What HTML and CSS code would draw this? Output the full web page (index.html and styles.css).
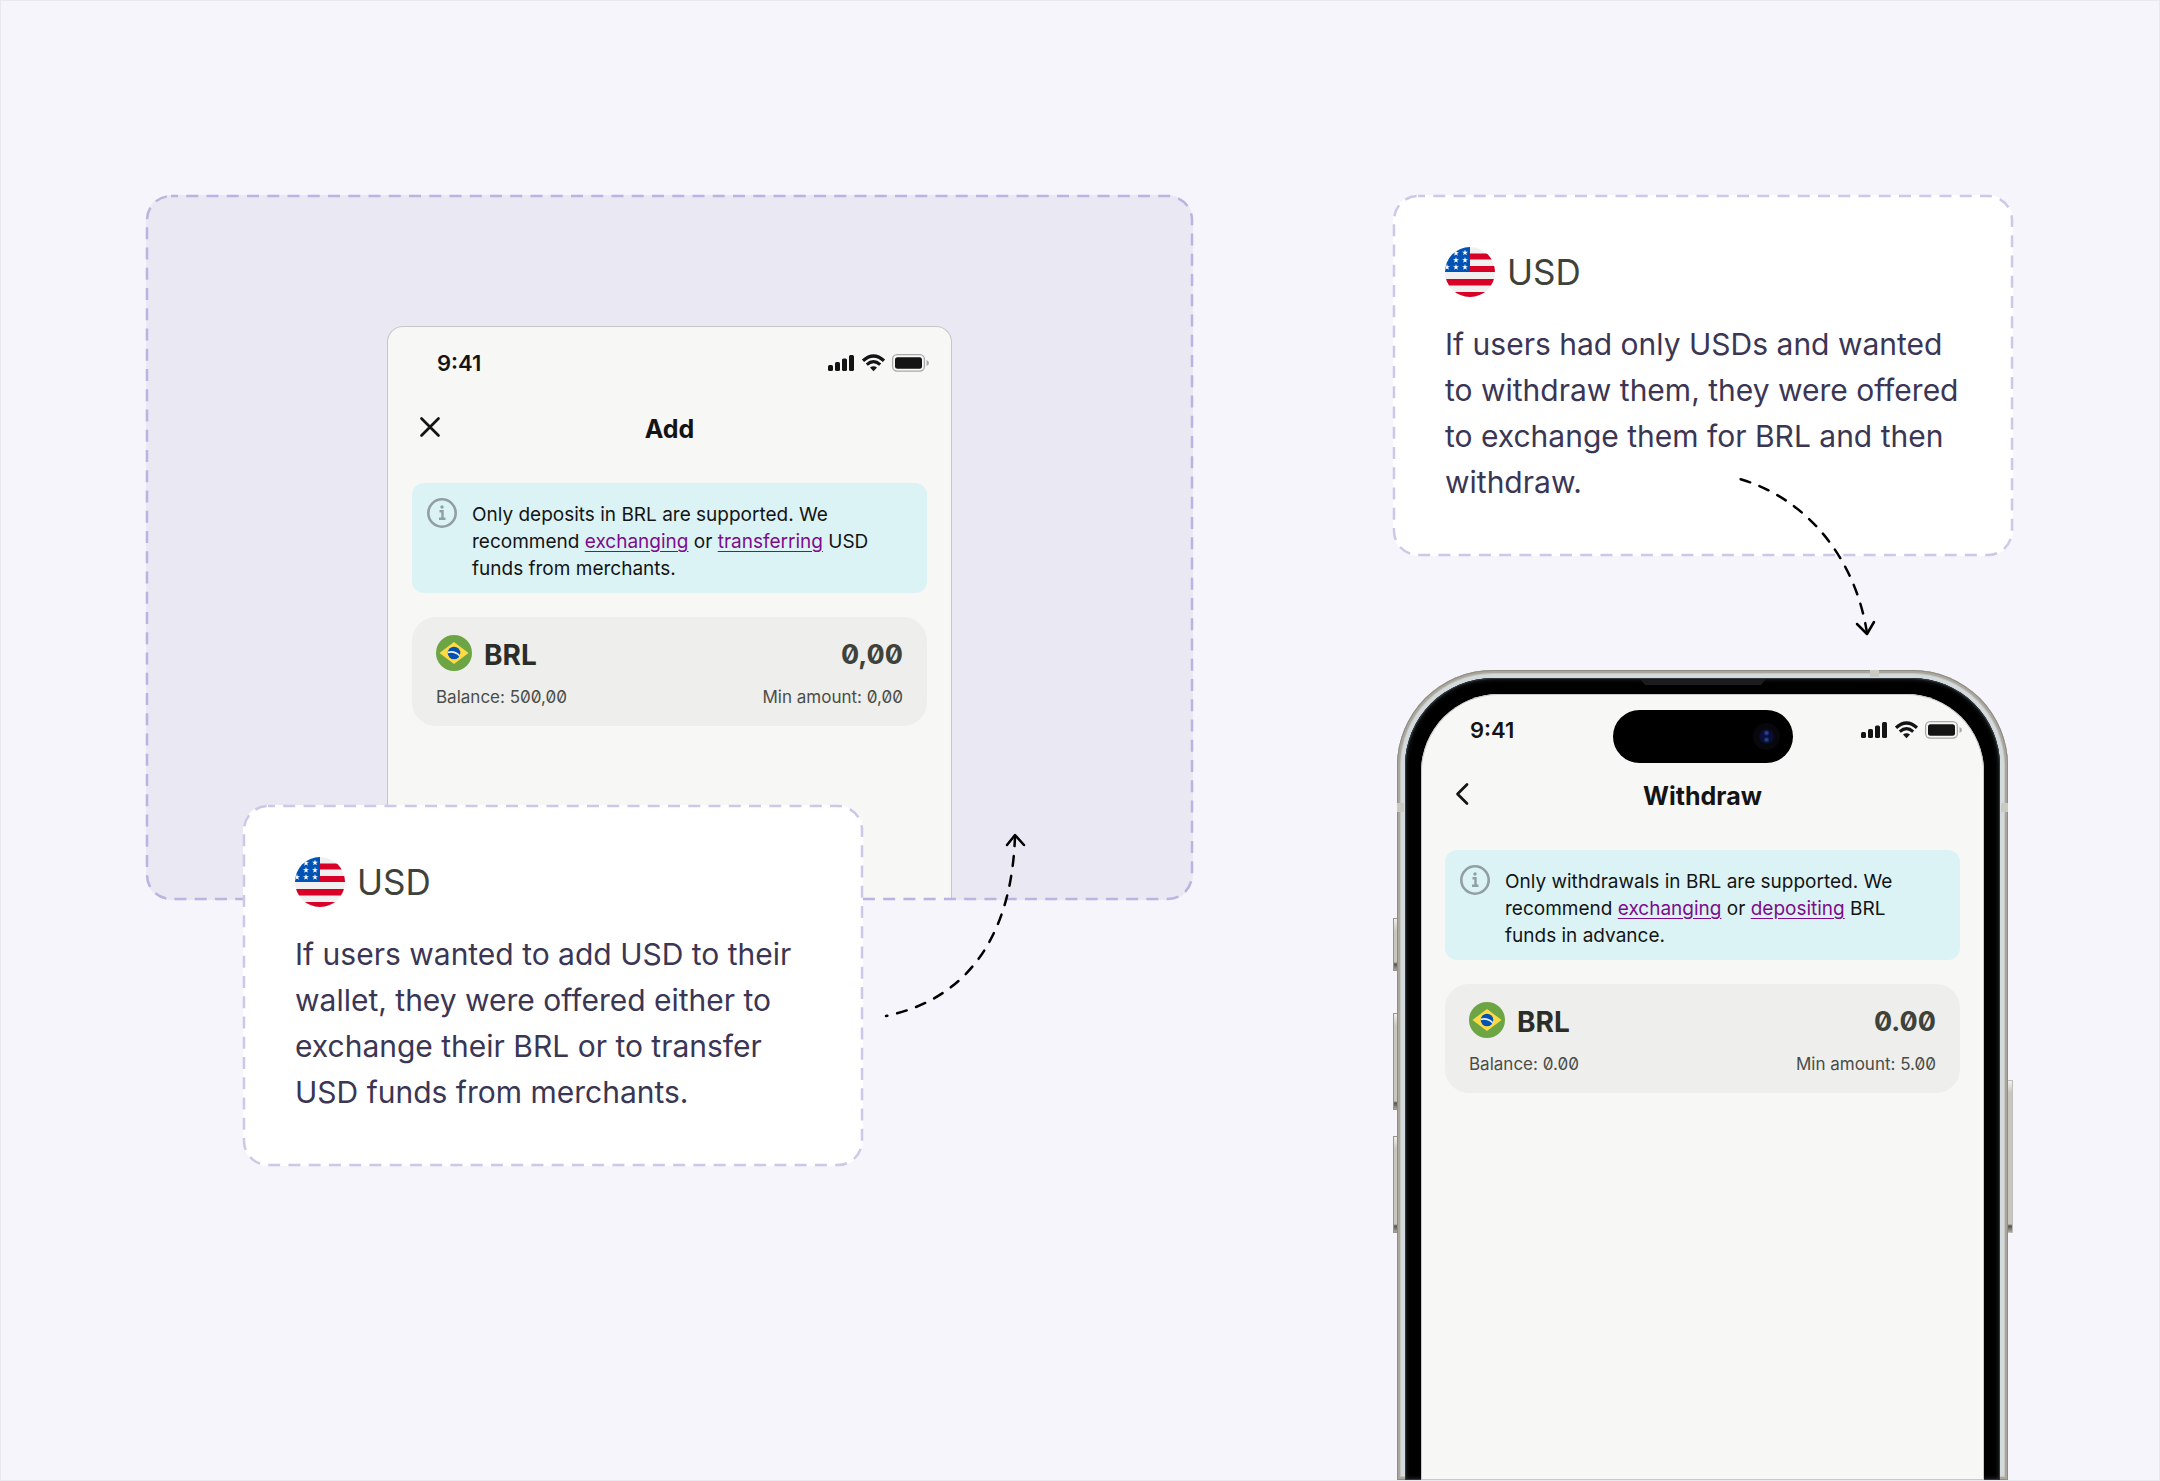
FILE: index.html
```html
<!DOCTYPE html>
<html lang="en">
<head>
  <meta charset="UTF-8" />
  <meta name="viewport" content="width=device-width, initial-scale=1.0" />
  <title>BRL Add and Withdraw flows</title>
  <link rel="stylesheet" href="styles.css">
</head>
<body>

<!-- shared icons -->
<svg class="sprite" aria-hidden="true">
  <symbol id="status" viewBox="0 0 102 18">
    <rect x="0" y="11" width="5" height="6" rx="1.5" fill="#141414"/>
    <rect x="7" y="8" width="5" height="9" rx="1.5" fill="#141414"/>
    <rect x="14" y="4.500" width="5" height="12.500" rx="1.500" fill="#141414"/>
    <rect x="21" y="1" width="5" height="16" rx="1.5" fill="#141414"/>
    <path d="M35 6.800 Q45.500 -2.800 56 6.800" fill="none" stroke="#141414" stroke-width="3.200"/>
    <path d="M38.800 10.600 Q45.500 4.600 52.200 10.600" fill="none" stroke="#141414" stroke-width="3"/>
    <path d="M42 13.600 Q45.500 10.800 49 13.600 L45.500 17.200 Z" fill="#141414"/>
    <rect x="64.600" y=".7" width="31.800" height="16.400" rx="4.500" fill="none" stroke="#a9a9a8" stroke-width="1.300"/>
    <rect x="67" y="3.200" width="27" height="11.500" rx="2.500" fill="#141414"/>
    <path d="M98.500 6 Q101 7 101 9 Q101 11 98.500 12 Z" fill="#a9a9a8"/>
  </symbol>
  <symbol id="info" viewBox="0 0 30 30">
    <circle cx="15" cy="15" r="13.700" fill="none" stroke="#919fa2" stroke-width="2.600"/>
    <circle cx="15" cy="9" r="1.700" fill="#919fa2"/>
    <path d="M12.500 13.200 H15.500 V20.600 M12 20.800 H18.500" fill="none" stroke="#919fa2" stroke-width="2.400"/>
  </symbol>
  <symbol id="brazil" viewBox="0 0 36 36">
    <circle cx="18" cy="18" r="18" fill="#6da544"/>
    <path d="M18 7 L32.500 18 L18 29 L3.500 18 Z" fill="#ffda44"/>
    <circle cx="18" cy="18" r="6.300" fill="#0052b4"/>
    <path d="M11.900 16.400 Q18.800 14.600 24 20 L23.300 21.500 Q18.500 16.600 11.700 18.200 Z" fill="#f0f0f0"/>
  </symbol>
  <symbol id="star" viewBox="0 0 10 10">
    <path d="M5 0 L6.200 3.700 L10 3.700 L6.900 6 L8.100 9.600 L5 7.400 L1.900 9.600 L3.100 6 L0 3.700 L3.800 3.700 Z" fill="#fff"/>
  </symbol>
  <clipPath id="disc"><circle cx="25" cy="25" r="25"/></clipPath>
  <symbol id="usa" viewBox="0 0 50 50">
    <g clip-path="url(#disc)">
      <rect width="50" height="50" fill="#f0f0f0"/>
      <path d="M25 6.500 H50 V12.500 H25 Z M25 19 H50 V25 H25 Z M0 32 H50 V38.500 H0 Z M0 45 H50 V50 H0 Z" fill="#d80027"/>
      <rect width="25" height="25" fill="#0052b4"/>
      <use href="#star" x="17" y="2.500" width="6" height="6"/>
      <use href="#star" x="8" y="3" width="6" height="6"/>
      <use href="#star" x="17" y="10" width="6" height="6"/>
      <use href="#star" x="8" y="10" width="6" height="6"/>
      <use href="#star" x="17" y="17" width="6" height="6"/>
      <use href="#star" x="8" y="17" width="6" height="6"/>
      <use href="#star" x="-1" y="17" width="6" height="6"/>
    </g>
  </symbol>
</svg>

<main class="board">

  <section class="flow">
    <div class="panel">
      <div class="screen screen-cut">
        <div class="status-bar">
          <span class="time">9:41</span>
          <svg class="status-icons" aria-hidden="true"><use href="#status"/></svg>
        </div>
        <header class="nav">
          <button class="nav-button" aria-label="Close">
            <svg viewBox="0 0 24 24"><path d="M3.500 3.500 L20.500 20.500 M20.500 3.500 L3.500 20.500"/></svg>
          </button>
          <h2>Add</h2>
        </header>
        <div class="alert">
          <svg class="alert-icon" aria-hidden="true"><use href="#info"/></svg>
          <p>Only deposits in BRL are supported. We recommend <a href="#">exchanging</a> or <a href="#">transferring</a> USD funds from merchants.</p>
        </div>
        <div class="wallet">
          <div class="wallet-row">
            <svg class="wallet-flag" aria-hidden="true"><use href="#brazil"/></svg>
            <span class="currency">BRL</span>
            <span class="amount">0,00</span>
          </div>
          <div class="wallet-row wallet-meta">
            <span>Balance: 500,00</span>
            <span>Min amount: 0,00</span>
          </div>
        </div>
      </div>
      <svg class="dashes" aria-hidden="true"><rect x="1" y="1" rx="24"/></svg>
    </div>

    <article class="note note-over">
      <svg class="dashes" aria-hidden="true"><rect x="1" y="1" rx="24"/></svg>
      <div class="note-head">
        <svg class="note-flag" aria-hidden="true"><use href="#usa"/></svg>
        <h3>USD</h3>
      </div>
      <p>If users wanted to add USD to their wallet, they were offered either to exchange their BRL or to transfer USD funds from merchants.</p>
      <svg class="arrow arrow-up" viewBox="0 0 150 190" aria-hidden="true">
        <path class="arrow-line" d="M135 6 C132 100 92 168 6 186"/>
        <path d="M127 15 L135 5 L144 15"/>
      </svg>
    </article>
  </section>

  <section class="flow">
    <article class="note">
      <svg class="dashes" aria-hidden="true"><rect x="1" y="1" rx="24"/></svg>
      <div class="note-head">
        <svg class="note-flag" aria-hidden="true"><use href="#usa"/></svg>
        <h3>USD</h3>
      </div>
      <p>If users had only USDs and wanted to withdraw them, they were offered to exchange them for BRL and then withdraw.</p>
      <svg class="arrow arrow-down" viewBox="0 0 150 166" aria-hidden="true">
        <path class="arrow-line" d="M132 159 C120 82 70 24 5 5"/>
        <path d="M122 150 L132 160 L139 148"/>
      </svg>
    </article>

    <div class="phone">
      <i class="key key-action"></i>
      <i class="key key-up"></i>
      <i class="key key-down"></i>
      <i class="key key-power"></i>
      <div class="phone-rim">
        <i class="band band-top"></i>
        <i class="band band-left"></i>
        <i class="band band-right"></i>
        <div class="phone-bezel">
          <svg class="earpiece" viewBox="0 0 126 7" aria-hidden="true"><path d="M0 0 H126 L121 6 H5 Z"/></svg>
          <div class="screen screen-full">
            <div class="island"><i class="camera"></i></div>
            <div class="status-bar">
              <span class="time">9:41</span>
              <svg class="status-icons" aria-hidden="true"><use href="#status"/></svg>
            </div>
            <header class="nav">
              <button class="nav-button" aria-label="Back">
                <svg viewBox="0 0 24 24"><path d="M16 2.500 L6.500 12 L16 21.500"/></svg>
              </button>
              <h2>Withdraw</h2>
            </header>
            <div class="alert">
              <svg class="alert-icon" aria-hidden="true"><use href="#info"/></svg>
              <p>Only withdrawals in BRL are supported. We recommend <a href="#">exchanging</a> or <a href="#">depositing</a> BRL funds in advance.</p>
            </div>
            <div class="wallet">
              <div class="wallet-row">
                <svg class="wallet-flag" aria-hidden="true"><use href="#brazil"/></svg>
                <span class="currency">BRL</span>
                <span class="amount">0.00</span>
              </div>
              <div class="wallet-row wallet-meta">
                <span>Balance: 0.00</span>
                <span>Min amount: 5.00</span>
              </div>
            </div>
          </div>
        </div>
      </div>
    </div>
  </section>

</main>

</body>
</html>
```
FILE: styles.css
```css
* {
  box-sizing: border-box;
}

body {
  margin: 0;
  font-family: Inter, "Liberation Sans", sans-serif;
  background: #f6f5fb;
}

h2, h3, p {
  margin: 0;
}

.sprite {
  position: absolute;
  width: 0;
  height: 0;
}

.board {
  display: grid;
  grid-template-columns: 1047fr 620fr;
  gap: 200px;
  height: 100vh;
  min-height: 1200px;
  padding: 194px 146px 0 145px;
  border: 1px solid #eae9f0;
  overflow: hidden;
}

.flow {
  display: flex;
  flex-direction: column;
}

/* dashed outlines */
.dashes {
  position: absolute;
  inset: 0;
  width: 100%;
  height: 100%;
  overflow: visible;
  pointer-events: none;
}

.dashes rect {
  width: calc(100% - 2px);
  height: calc(100% - 2px);
  fill: none;
  stroke: #cdc8e8;
  stroke-width: 2.5;
  stroke-dasharray: 12 8.25;
  stroke-dashoffset: 5;
}

.panel {
  position: relative;
  display: flex;
  justify-content: center;
  padding-top: 131px;
  border-radius: 25px;
  background: #eae8f3;
}

.panel .dashes rect {
  stroke: #b9b4e0;
}

/* notes */
.note {
  position: relative;
  padding: 52px 50px 51px 52px;
  border-radius: 25px;
  background: #fff;
}

.note-over {
  width: 620px;
  margin: -95px 0 0 97px;
}

.note-head {
  display: flex;
  align-items: center;
  gap: 12px;
  margin-bottom: 24px;
}

.note-flag {
  width: 50px;
  height: 50px;
}

.note h3 {
  font-size: 35px;
  font-weight: 400;
  line-height: 50px;
  color: #3f423b;
}

.note p {
  font-size: 30px;
  line-height: 46px;
  color: #3a3654;
}

.arrow {
  position: absolute;
  fill: none;
  stroke: #000;
  stroke-width: 2.5;
  stroke-linecap: round;
  stroke-linejoin: round;
}

.arrow-line {
  stroke-dasharray: 10 10;
}

.arrow-up {
  left: 637px;
  top: 25px;
  width: 150px;
  height: 190px;
}

.arrow-down {
  right: 128px;
  top: 279px;
  width: 150px;
  height: 166px;
}

/* app screen */
.screen {
  position: relative;
  padding: 0 24px;
  background: #f7f7f5;
}

.screen-cut {
  width: 565px;
  height: 574px;
  border: 1px solid #c6c6c8;
  border-bottom: 0;
  border-radius: 16px 16px 0 0;
}

.status-bar {
  display: flex;
  align-items: center;
  justify-content: space-between;
  height: 72px;
  padding-left: 25px;
}

.time {
  font-size: 22px;
  font-weight: 600;
  color: #141414;
}

.status-icons {
  width: 102px;
  height: 18px;
  margin-right: -3px;
}

.nav {
  display: flex;
  align-items: center;
  justify-content: center;
  height: 60px;
  margin-bottom: 24px;
  position: relative;
}

.nav h2 {
  font-size: 25px;
  font-weight: 700;
  line-height: 36px;
  color: #141414;
}

.nav-button {
  position: absolute;
  left: 6px;
  top: 16px;
  width: 24px;
  height: 24px;
  padding: 0;
  border: 0;
  background: none;
  cursor: pointer;
}

.nav-button svg {
  display: block;
  fill: none;
  stroke: #141414;
  stroke-width: 2.7;
  stroke-linecap: round;
  stroke-linejoin: round;
}

.alert {
  display: flex;
  gap: 15px;
  height: 110px;
  padding: 15px 40px 15px 15px;
  border-radius: 12px;
  background: #dcf3f6;
}

.alert-icon {
  flex: none;
  width: 30px;
  height: 30px;
}

.alert p {
  padding-top: 3px;
  font-size: 19px;
  line-height: 27px;
  color: #141414;
}

.alert a {
  color: #7d0b8b;
  text-underline-offset: 3px;
}

.wallet {
  margin-top: 24px;
  padding: 18px 24px 16px;
  border-radius: 24px;
  background: #eeeeec;
  font-feature-settings: "zero";
}

.wallet-row {
  display: flex;
  align-items: center;
}

.wallet-flag {
  width: 36px;
  height: 36px;
  margin-right: 12px;
}

.currency,
.amount {
  padding-top: 4px;
  font-size: 28px;
  font-weight: 700;
  line-height: 32px;
  color: #2b2d29;
}

.amount {
  margin-left: auto;
  font-size: 27px;
  color: #3f423b;
}

.wallet-meta {
  justify-content: space-between;
  margin-top: 14px;
  font-size: 17px;
  line-height: 25px;
  color: #4a4d47;
}

/* device */
.phone {
  position: relative;
  display: flex;
  flex: 1;
  margin-top: 114px;
  padding: 0 5px 0 4px;
}

.phone-rim {
  position: relative;
  display: flex;
  flex: 1;
  padding: 8px 8px 0;
  border-radius: 96px 96px 0 0;
  background: #d3dadd;
  box-shadow: inset 0 0 0 1px #8f8c84, inset 0 0 0 3px #aaa79f, inset 0 0 0 4px #c6c5bf;
}

.phone-bezel {
  position: relative;
  display: flex;
  flex: 1;
  padding: 16px 16px 0;
  border-radius: 88px 88px 0 0;
  background: #000;
  box-shadow: inset 0 0 0 1px #30363a, inset 0 0 4px 1px #2b3033;
}

.screen-full {
  flex: 1;
  border-radius: 78px 78px 0 0;
  box-shadow: inset 0 0 0 1px #c9c9c8;
}

.earpiece {
  position: absolute;
  top: 1px;
  left: calc(50% - 63px);
  width: 126px;
  height: 7px;
  fill: #1c1c1e;
}

.island {
  position: absolute;
  top: 16px;
  left: calc(50% - 90px);
  width: 180px;
  height: 53px;
  border-radius: 27px;
  background: #000;
}

.camera {
  position: absolute;
  top: 13px;
  right: 13px;
  width: 27px;
  height: 27px;
  border-radius: 50%;
  background: radial-gradient(circle at 50% 37%, #2c3f8f 0 1px, transparent 3px),
    radial-gradient(circle at 50% 62%, #1d4a74 0 1px, transparent 3px),
    radial-gradient(circle, #0b0d3c 0 6px, #08070c 8px);
}

.band {
  position: absolute;
  background: #c9cbc3;
}

.band-top {
  top: 0;
  right: 129px;
  width: 9px;
  height: 7px;
}

.band-left,
.band-right {
  top: 133px;
  width: 7px;
  height: 9px;
}

.band-left {
  left: 0;
}

.band-right {
  right: 0;
}

.key {
  position: absolute;
  left: 0;
  width: 4px;
  border: 1px solid #96938b;
  border-right: 0;
  background: linear-gradient(#f0efec, #c9c6be 12px calc(100% - 8px), #55534e calc(100% - 6px), #aaa79f);
}

.key-action {
  top: 248px;
  height: 53px;
}

.key-up {
  top: 343px;
  height: 97px;
}

.key-down {
  top: 466px;
  height: 97px;
}

.key-power {
  top: 410px;
  left: auto;
  right: 0;
  width: 5px;
  height: 153px;
  border-color: #c0beb8;
  border-right: 1px solid #c0beb8;
  border-left: 0;
}
```
